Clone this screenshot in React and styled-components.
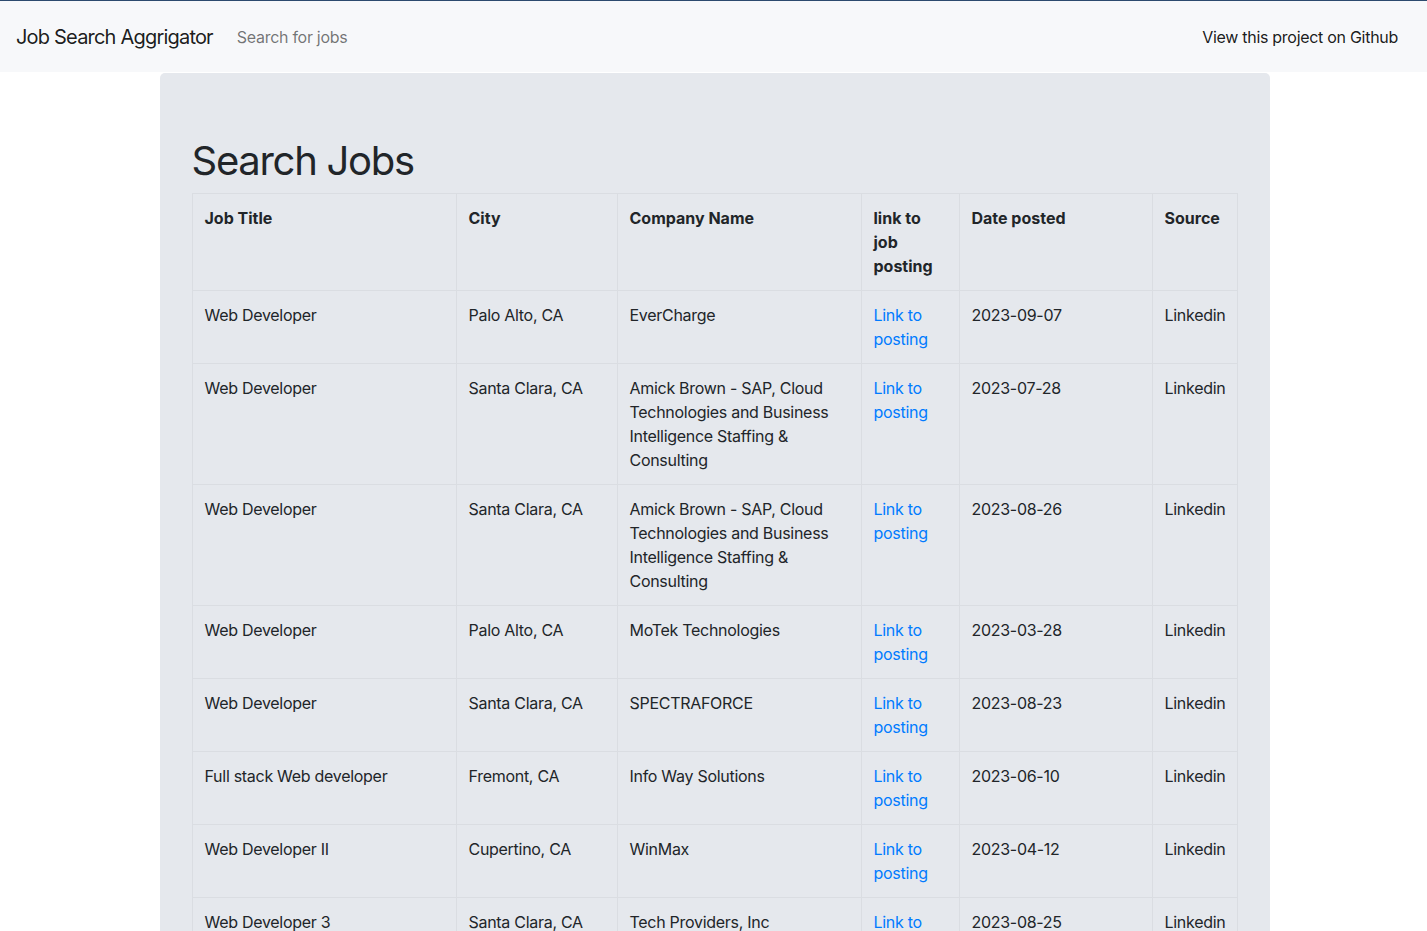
import styled, { createGlobalStyle } from 'styled-components';

const GlobalStyle = createGlobalStyle`
  * { box-sizing: border-box; }
  body {
    margin: 0;
    font-family: Inter, "Noto Sans", sans-serif;
    font-size: 16px;
    line-height: 1.5;
    letter-spacing: -0.018em;
    color: #212529;
    background: #fff;
  }
`;

const Navbar = styled.nav`
  display: flex;
  align-items: center;
  height: 72px;
  padding: 0 29px 0 16px;
  background-color: #f7f8fa;
  border-top: 1px solid #2c4a6e;
`;

const Brand = styled.a`
  font-size: 20px;
  letter-spacing: -0.04em;
  color: rgba(0, 0, 0, 0.9);
  text-decoration: none;
  margin-right: 24px;
  white-space: nowrap;
`;

const NavLink = styled.a`
  font-size: 16px;
  color: ${(p) => (p.$dark ? 'rgba(0, 0, 0, 0.9)' : 'rgba(0, 0, 0, 0.55)')};
  text-decoration: none;
  margin-left: ${(p) => (p.$right ? 'auto' : '0')};
  white-space: nowrap;
`;

const Page = styled.div`
  padding: 1px 0 0 2px;
`;

const Container = styled.main`
  width: 1110px;
  margin: 0 auto;
`;

const Jumbotron = styled.section`
  background-color: #e5e8ed;
  border-radius: 5px;
  padding: 64px 32px;
`;

const Title = styled.h1`
  margin: 0 0 8px;
  font-size: 40px;
  font-weight: 400;
  line-height: 1.2;
  letter-spacing: -0.032em;
`;

const Table = styled.table`
  width: 100%;
  border-collapse: collapse;
  table-layout: fixed;
`;

const Th = styled.th`
  width: ${(p) => p.$w}px;
  padding: 12px;
  border: 1px solid #dadde2;
  text-align: left;
  vertical-align: top;
  font-weight: 700;
  letter-spacing: 0;
`;

const Td = styled.td`
  padding: 12px;
  border: 1px solid #dadde2;
  vertical-align: top;
`;

const PostingLink = styled.a`
  color: #007bff;
  text-decoration: none;
`;

const columns = [
  { label: 'Job Title', w: 264 },
  { label: 'City', w: 161 },
  { label: 'Company Name', w: 244 },
  { label: 'link to job posting', w: 98 },
  { label: 'Date posted', w: 193 },
  { label: 'Source', w: 85 },
];

const amick = 'Amick Brown - SAP, Cloud Technologies and Business Intelligence Staffing & Consulting';

const jobs = [
  ['Web Developer', 'Palo Alto, CA', 'EverCharge', '2023-09-07'],
  ['Web Developer', 'Santa Clara, CA', amick, '2023-07-28'],
  ['Web Developer', 'Santa Clara, CA', amick, '2023-08-26'],
  ['Web Developer', 'Palo Alto, CA', 'MoTek Technologies', '2023-03-28'],
  ['Web Developer', 'Santa Clara, CA', 'SPECTRAFORCE', '2023-08-23'],
  ['Full stack Web developer', 'Fremont, CA', 'Info Way Solutions', '2023-06-10'],
  ['Web Developer II', 'Cupertino, CA', 'WinMax', '2023-04-12'],
  ['Web Developer 3', 'Santa Clara, CA', 'Tech Providers, Inc', '2023-08-25'],
  ['Front End Web Developer', 'San Jose, CA', 'Robert Half', '2023-08-30'],
];

export default function App() {
  return (
    <>
      <GlobalStyle />
      <Navbar>
        <Brand href="#">Job Search Aggrigator</Brand>
        <NavLink href="#">Search for jobs</NavLink>
        <NavLink href="#" $right $dark>View this project on Github</NavLink>
      </Navbar>
      <Page>
        <Container>
          <Jumbotron>
            <Title>Search Jobs</Title>
            <Table>
              <thead>
                <tr>
                  {columns.map((c) => (
                    <Th key={c.label} $w={c.w}>{c.label}</Th>
                  ))}
                </tr>
              </thead>
              <tbody>
                {jobs.map((j, i) => (
                  <tr key={i}>
                    <Td>{j[0]}</Td>
                    <Td>{j[1]}</Td>
                    <Td>{j[2]}</Td>
                    <Td><PostingLink href="#">Link to posting</PostingLink></Td>
                    <Td>{j[3]}</Td>
                    <Td>Linkedin</Td>
                  </tr>
                ))}
              </tbody>
            </Table>
          </Jumbotron>
        </Container>
      </Page>
    </>
  );
}
